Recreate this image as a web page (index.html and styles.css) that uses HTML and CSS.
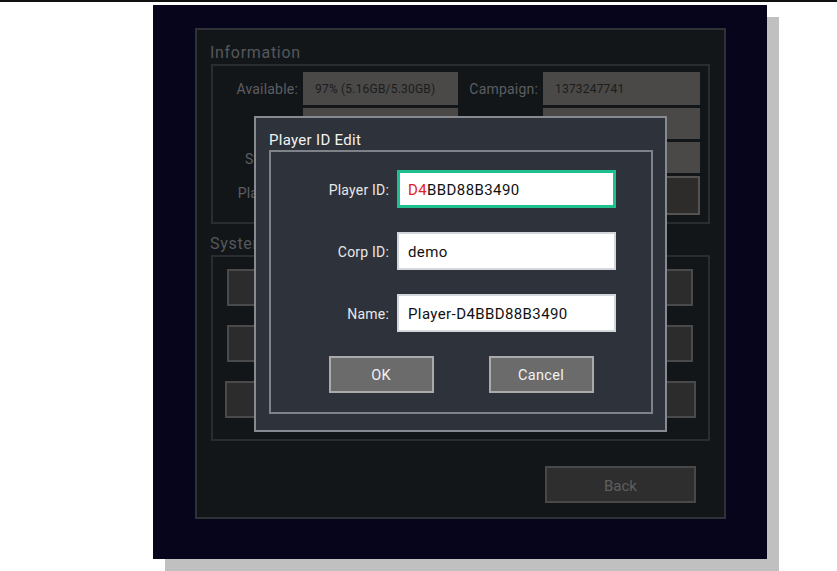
FILE: index.html
```html
<!DOCTYPE html>
<html>
<head>
    <link rel="stylesheet" href="styles.css">
</head>
<body>
    <div class="topline"></div>

    <div class="screen">
        <div class="panel">
            <h3 class="section-title first">Information</h3>
            <div class="info-box">
                <div class="label">Available:</div>
                <div class="value">97% (5.16GB/5.30GB)</div>
                <div class="label">Campaign:</div>
                <div class="value">1373247741</div>

                <div class="label"></div>
                <div class="value"></div>
                <div class="label"></div>
                <div class="value"></div>

                <div class="label">Storage:</div>
                <div class="value"></div>
                <div class="label"></div>
                <div class="value"></div>

                <div class="label">Player ID:</div>
                <div class="value"></div>
                <div class="label"></div>
                <div class="value value-btn"></div>
            </div>

            <h3 class="section-title">System</h3>
            <div class="system-box">
                <div class="sys-row">
                    <div class="sys-btn"></div>
                    <div class="sys-btn"></div>
                </div>
                <div class="sys-row">
                    <div class="sys-btn"></div>
                    <div class="sys-btn"></div>
                </div>
                <div class="sys-row wide">
                    <div class="sys-btn"></div>
                    <div class="sys-btn"></div>
                </div>
            </div>

            <div class="back-row">
                <div class="back-btn">Back</div>
            </div>
        </div>

        <div class="dialog">
            <div class="dialog-title">Player ID Edit</div>
            <div class="dialog-body">
                <div class="field-row">
                    <div class="field-label">Player ID:</div>
                    <div class="field focused"><span class="red">D4</span>BBD88B3490</div>
                </div>
                <div class="field-row">
                    <div class="field-label">Corp ID:</div>
                    <div class="field">demo</div>
                </div>
                <div class="field-row">
                    <div class="field-label">Name:</div>
                    <div class="field">Player-D4BBD88B3490</div>
                </div>
                <div class="btn-row">
                    <div class="dlg-btn">OK</div>
                    <div class="dlg-btn">Cancel</div>
                </div>
            </div>
        </div>
    </div>
</body>
</html>
```

FILE: styles.css
```css
body {
    margin: 0;
    padding-bottom: 12px;
    background: #fff;
    font-family: Roboto, "Liberation Sans", sans-serif;
}

.topline {
    height: 2px;
    background: #111;
}

.screen {
    position: relative;
    width: 614px;
    height: 554px;
    margin: 3px 0 0 153px;
    background: #07051c;
    box-shadow: 12px 12px 0 #c0c0c0;
    overflow: hidden;
}

.panel {
    box-sizing: border-box;
    width: 531px;
    height: 491px;
    margin: 23px 0 0 42px;
    padding: 0 14px;
    background: #131619;
    border: 2px solid #2f3235;
}

.section-title {
    margin: 8px 0 0 -1px;
    height: 23px;
    line-height: 23px;
    font-size: 16px;
    letter-spacing: 0.7px;
    font-weight: normal;
    color: #55585c;
}

.section-title.first {
    margin-top: 11px;
}

.info-box {
    display: grid;
    grid-template-columns: 90px 155px 85px 157px;
    grid-template-rows: 33px 31px 31px 39px;
    row-gap: 3px;
    padding: 6px 9px 7px 0;
    border: 2px solid #2a2d30;
}

.label {
    padding-right: 5px;
    text-align: right;
    font-size: 14px;
    letter-spacing: 0.2px;
    line-height: 34px;
    color: #5b5e62;
}

.value {
    background: #4a4947;
    padding-left: 12px;
    font-size: 12px;
    letter-spacing: 0.2px;
    line-height: 34px;
    color: #1c1c1c;
}

.value-btn {
    background: #2d2c2b;
    border: 2px solid #545352;
}

.system-box {
    display: flex;
    flex-direction: column;
    gap: 19px;
    padding: 12px 15px 21px 14px;
    border: 2px solid #2a2d30;
}

.sys-row {
    display: flex;
    gap: 20px;
    height: 37px;
}

.sys-row.wide {
    margin: 0 -3px 0 -2px;
}

.sys-btn {
    flex: 1;
    background: #2d2c2c;
    border: 2px solid #4a4a4a;
}

.back-row {
    display: flex;
    justify-content: flex-end;
    margin-top: 25px;
    padding-right: 14px;
}

.back-btn {
    box-sizing: border-box;
    width: 151px;
    height: 37px;
    line-height: 36px;
    text-align: center;
    font-size: 15px;
    color: #5f5f5f;
    background: #2e2e2e;
    border: 2px solid #484848;
}

.dialog {
    position: absolute;
    left: 101px;
    top: 111px;
    box-sizing: border-box;
    width: 413px;
    height: 316px;
    padding: 0 12px 16px 13px;
    background: #2e323a;
    border: 2px solid #878b91;
}

.dialog-title {
    padding-top: 12px;
    height: 20px;
    line-height: 20px;
    font-size: 15px;
    letter-spacing: 0.3px;
    color: #f2f2f2;
}

.dialog-body {
    padding: 18px 0 19px;
    border: 2px solid #7e8289;
}

.field-row {
    display: flex;
    align-items: center;
    margin-bottom: 24px;
}

.field-label {
    width: 118px;
    margin-right: 8px;
    padding-top: 2px;
    text-align: right;
    font-size: 14px;
    letter-spacing: 0.2px;
    color: #e8e8e8;
}

.field {
    box-sizing: border-box;
    width: 219px;
    height: 38px;
    padding-left: 9px;
    line-height: 36px;
    font-size: 15px;
    letter-spacing: 0.4px;
    color: #111;
    background: #fff;
    border: 2px solid #d3d6da;
}

.field.focused {
    border: 3px solid #20bf8f;
    padding-left: 8px;
    line-height: 34px;
}

.red {
    color: #e3201c;
}

.btn-row {
    display: flex;
    justify-content: center;
    gap: 55px;
}

.dlg-btn {
    box-sizing: border-box;
    width: 105px;
    height: 37px;
    line-height: 36px;
    text-align: center;
    font-size: 14.5px;
    letter-spacing: 0.3px;
    color: #f2f2f2;
    background: #6b6b6b;
    border: 2px solid #aaaaaa;
}
```
